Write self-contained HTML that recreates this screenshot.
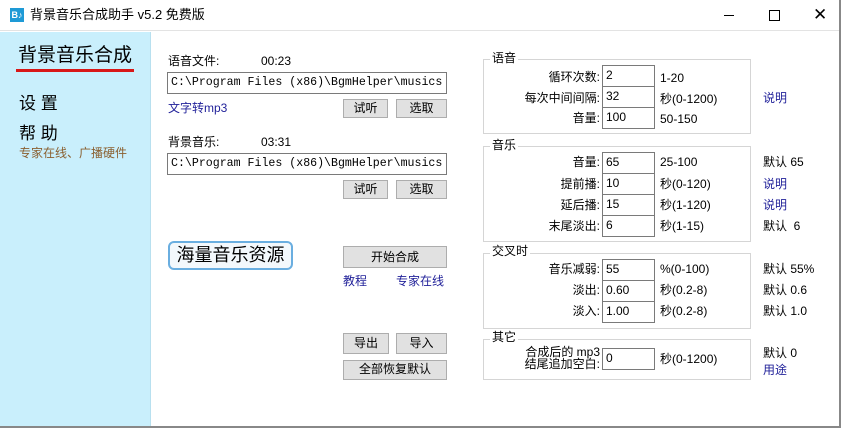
<!DOCTYPE html>
<html><head><meta charset="utf-8"><style>
*{margin:0;padding:0;box-sizing:border-box}
body{width:841px;height:428px;overflow:hidden;background:#fff;position:relative;font-family:"Liberation Sans","Noto Sans CJK SC",sans-serif;font-size:12px;color:#000}
.a{position:absolute;white-space:nowrap;line-height:1}
.inp{position:absolute;border:1px solid #7a7a7a;background:#fff;padding:3px 0 0 3px;font-size:12px;line-height:1;white-space:nowrap;overflow:hidden}
.mono{font-family:"Liberation Mono","Noto Sans CJK SC",monospace;font-size:11.6px;padding-top:4px}
.btn{position:absolute;background:#e1e1e1;border:1px solid #adadad;text-align:center;font-size:12px;line-height:17px}
.grp{position:absolute;border:1px solid #d5d5d5}
.lg{position:absolute;background:#fff;padding:0 2px;font-size:12px;line-height:1}
.lab{position:absolute;text-align:right;white-space:nowrap;font-size:12px;line-height:1}
.blue{color:#22229a}
</style></head><body>
<div style="position:absolute;left:0;top:0;width:841px;height:31px;background:#fff;border-bottom:1px solid #e3e3e3"></div>
<div style="position:absolute;left:10px;top:8px;width:14px;height:14px;background:#1e9ad6;color:#fff;font-size:9px;line-height:14px;text-align:center;font-weight:bold">B♪</div>
<div class="a" style="left:30px;top:8px;font-size:13px">背景音乐合成助手 v5.2 免费版</div>
<div style="position:absolute;left:724px;top:15px;width:10px;height:1px;background:#000"></div>
<div style="position:absolute;left:769px;top:10px;width:11px;height:11px;border:1px solid #000"></div>
<div class="a" style="left:813px;top:6px;font-size:17px">✕</div>
<div style="position:absolute;left:839px;top:0;width:2px;height:428px;background:#888"></div>
<div style="position:absolute;left:0;top:426px;width:841px;height:2px;background:#888"></div>

<div style="position:absolute;left:0;top:32px;width:151px;height:394px;background:#c9effc;border-right:1px solid #b8e0ef"></div>
<div class="a" style="left:18px;top:46px;font-size:19px">背景音乐合成</div>
<div style="position:absolute;left:16px;top:69px;width:118px;height:3px;background:#d81818"></div>
<div class="a" style="left:19px;top:95px;font-size:17px">设 置</div>
<div class="a" style="left:19px;top:125px;font-size:17px">帮 助</div>
<div class="a" style="left:19px;top:147px;font-size:12px;color:#8a6030">专家在线、广播硬件</div>

<div class="a" style="left:168px;top:55px">语音文件:</div>
<div class="a" style="left:261px;top:55px">00:23</div>
<div class="inp mono" style="left:167px;top:72px;width:280px;height:22px">C:\Program Files (x86)\BgmHelper\musics</div>
<div class="a blue" style="left:168px;top:102px">文字转mp3</div>
<div class="btn" style="left:343px;top:99px;width:45px;height:19px">试听</div>
<div class="btn" style="left:396px;top:99px;width:51px;height:19px">选取</div>

<div class="a" style="left:168px;top:136px">背景音乐:</div>
<div class="a" style="left:261px;top:136px">03:31</div>
<div class="inp mono" style="left:167px;top:153px;width:280px;height:22px">C:\Program Files (x86)\BgmHelper\musics</div>
<div class="btn" style="left:343px;top:180px;width:45px;height:19px">试听</div>
<div class="btn" style="left:396px;top:180px;width:51px;height:19px">选取</div>

<div style="position:absolute;left:168px;top:241px;width:125px;height:29px;border:2px solid #6aaee0;border-radius:6px;background:#f3f8fc;font-size:18px;text-align:center;line-height:24px">海量音乐资源</div>
<div class="btn" style="left:343px;top:246px;width:104px;height:22px;line-height:20px">开始合成</div>
<div class="a blue" style="left:343px;top:275px">教程</div>
<div class="a blue" style="left:396px;top:275px">专家在线</div>
<div class="btn" style="left:343px;top:333px;width:46px;height:21px;line-height:19px">导出</div>
<div class="btn" style="left:396px;top:333px;width:51px;height:21px;line-height:19px">导入</div>
<div class="btn" style="left:343px;top:360px;width:104px;height:20px">全部恢复默认</div>

<!-- 语音 -->
<div class="grp" style="left:483px;top:59px;width:268px;height:75px"></div>
<div class="lg" style="left:490px;top:52px">语音</div>
<div class="lab" style="right:241px;top:71px">循环次数:</div>
<div class="inp" style="left:602px;top:65px;width:53px;height:22px">2</div>
<div class="a" style="left:660px;top:72px">1-20</div>
<div class="lab" style="right:241px;top:92px">每次中间间隔:</div>
<div class="inp" style="left:602px;top:86px;width:53px;height:22px">32</div>
<div class="a" style="left:660px;top:93px">秒(0-1200)</div>
<div class="a blue" style="left:763px;top:92px">说明</div>
<div class="lab" style="right:241px;top:112px">音量:</div>
<div class="inp" style="left:602px;top:107px;width:53px;height:22px">100</div>
<div class="a" style="left:660px;top:113px">50-150</div>

<!-- 音乐 -->
<div class="grp" style="left:483px;top:146px;width:268px;height:96px"></div>
<div class="lg" style="left:490px;top:139px">音乐</div>
<div class="lab" style="right:241px;top:156px">音量:</div>
<div class="inp" style="left:602px;top:152px;width:53px;height:22px">65</div>
<div class="a" style="left:660px;top:156px">25-100</div>
<div class="a" style="left:763px;top:156px">默认 65</div>
<div class="lab" style="right:241px;top:178px">提前播:</div>
<div class="inp" style="left:602px;top:173px;width:53px;height:22px">10</div>
<div class="a" style="left:660px;top:178px">秒(0-120)</div>
<div class="a blue" style="left:763px;top:178px">说明</div>
<div class="lab" style="right:241px;top:199px">延后播:</div>
<div class="inp" style="left:602px;top:194px;width:53px;height:22px">15</div>
<div class="a" style="left:660px;top:199px">秒(1-120)</div>
<div class="a blue" style="left:763px;top:199px">说明</div>
<div class="lab" style="right:241px;top:220px">末尾淡出:</div>
<div class="inp" style="left:602px;top:215px;width:53px;height:22px">6</div>
<div class="a" style="left:660px;top:220px">秒(1-15)</div>
<div class="a" style="left:763px;top:220px">默认&nbsp;&nbsp;6</div>

<!-- 交叉时 -->
<div class="grp" style="left:483px;top:253px;width:268px;height:76px"></div>
<div class="lg" style="left:490px;top:245px">交叉时</div>
<div class="lab" style="right:241px;top:263px">音乐减弱:</div>
<div class="inp" style="left:602px;top:259px;width:53px;height:22px">55</div>
<div class="a" style="left:660px;top:263px">%(0-100)</div>
<div class="a" style="left:763px;top:263px">默认 55%</div>
<div class="lab" style="right:241px;top:284px">淡出:</div>
<div class="inp" style="left:602px;top:280px;width:53px;height:22px">0.60</div>
<div class="a" style="left:660px;top:284px">秒(0.2-8)</div>
<div class="a" style="left:763px;top:284px">默认 0.6</div>
<div class="lab" style="right:241px;top:305px">淡入:</div>
<div class="inp" style="left:602px;top:301px;width:53px;height:22px">1.00</div>
<div class="a" style="left:660px;top:305px">秒(0.2-8)</div>
<div class="a" style="left:763px;top:305px">默认 1.0</div>

<!-- 其它 -->
<div class="grp" style="left:483px;top:339px;width:268px;height:41px"></div>
<div class="lg" style="left:490px;top:331px">其它</div>
<div class="lab" style="right:241px;top:346px;line-height:12px">合成后的 mp3<br>结尾追加空白:</div>
<div class="inp" style="left:602px;top:348px;width:53px;height:22px">0</div>
<div class="a" style="left:660px;top:353px">秒(0-1200)</div>
<div class="a" style="left:763px;top:347px">默认 0</div>
<div class="a blue" style="left:763px;top:364px">用途</div>
</body></html>
